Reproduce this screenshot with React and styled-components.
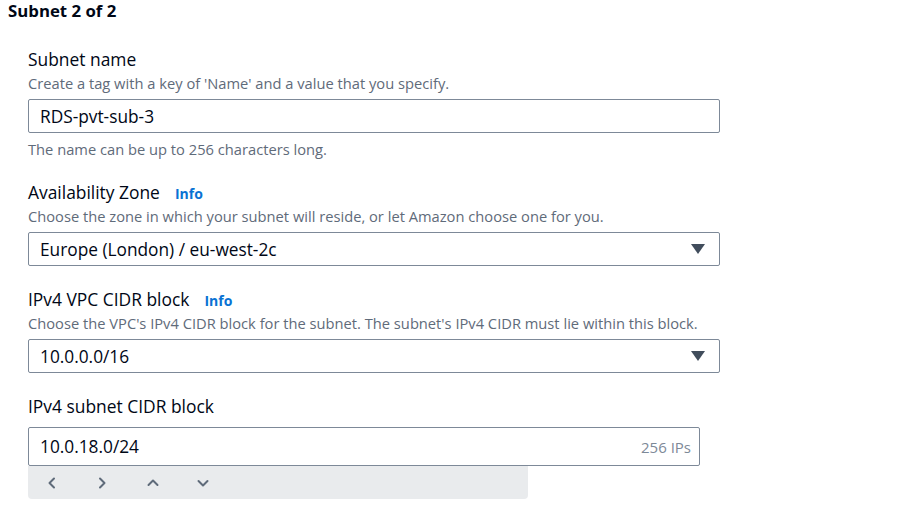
import React from 'react';
import styled, { createGlobalStyle } from 'styled-components';

const GlobalStyle = createGlobalStyle`
  body {
    margin: 0;
    background: #ffffff;
    font-family: 'Open Sans', 'Noto Sans', sans-serif;
    color: #000716;
  }
`;

const Page = styled.div`
  padding: 0 8px;
  width: 907px;
  box-sizing: border-box;
`;

const Title = styled.h2`
  margin: 0;
  font-size: 16.8px;
  line-height: 22px;
  font-weight: 700;
`;

const Form = styled.div`
  padding: 26px 0 0 20px;
  display: flex;
  flex-direction: column;
  gap: 22px;
`;

const Field = styled.div`
  display: flex;
  flex-direction: column;
  width: ${p => p.width || 692}px;
`;

const LabelRow = styled.div`
  display: flex;
  align-items: baseline;
  gap: 15px;
`;

const Label = styled.label`
  font-size: 17.4px;
  line-height: 22px;
`;

const Info = styled.a`
  color: #0972d3;
  font-size: 14px;
  font-weight: 700;
  text-decoration: none;
`;

const Description = styled.div`
  font-size: 14.7px;
  line-height: 20px;
  color: #5f6b7a;
  margin-top: 3px;
  white-space: nowrap;
`;

const Constraint = styled(Description)`
  margin-top: 6px;
`;

const Box = styled.div`
  margin-top: ${p => p.gap ?? 6}px;
  height: ${p => p.height || 34}px;
  box-sizing: border-box;
  border: 1px solid #7d8998;
  border-radius: 2px;
  padding: 0 11px;
  display: flex;
  align-items: center;
  justify-content: space-between;
  font-size: 17.3px;
  background: #fff;
`;

const Suffix = styled.span`
  color: #7d8998;
  font-size: 15px;
  margin-right: -3px;
`;

const Caret = styled.span`
  width: 0;
  height: 0;
  border-left: 7px solid transparent;
  border-right: 7px solid transparent;
  border-top: 10px solid #414d5c;
  margin-right: 3px;
`;

const Toolbar = styled.div`
  width: 500px;
  height: 33px;
  box-sizing: border-box;
  background: #e9ebed;
  border-radius: 0 0 4px 4px;
  display: flex;
  align-items: center;
  padding-left: 17px;
  gap: 36.3px;
`;

const NavButton = styled.span`
  width: 14px;
  height: 14px;
  display: flex;
  align-items: center;
  justify-content: center;
`;

const chevrons = {
  left: '9,2.5 4.5,7 9,11.5',
  right: '5,2.5 9.5,7 5,11.5',
  up: '2.5,9 7,4.5 11.5,9',
  down: '2.5,5 7,9.5 11.5,5',
};

const Chevron = ({ dir }) => (
  <NavButton>
    <svg width="14" height="14" viewBox="0 0 14 14">
      <polyline points={chevrons[dir]} fill="none" stroke="#5f6b7a" strokeWidth="2" strokeLinecap="round" strokeLinejoin="round" />
    </svg>
  </NavButton>
);

export default function App() {
  return (
    <Page>
      <GlobalStyle />
      <Title>Subnet 2 of 2</Title>
      <Form>
        <Field>
          <Label>Subnet name</Label>
          <Description>Create a tag with a key of 'Name' and a value that you specify.</Description>
          <Box>RDS-pvt-sub-3</Box>
          <Constraint>The name can be up to 256 characters long.</Constraint>
        </Field>
        <Field>
          <LabelRow>
            <Label>Availability Zone</Label>
            <Info>Info</Info>
          </LabelRow>
          <Description>Choose the zone in which your subnet will reside, or let Amazon choose one for you.</Description>
          <Box>
            Europe (London) / eu-west-2c
            <Caret />
          </Box>
        </Field>
        <Field>
          <LabelRow>
            <Label>IPv4 VPC CIDR block</Label>
            <Info>Info</Info>
          </LabelRow>
          <Description>Choose the VPC's IPv4 CIDR block for the subnet. The subnet's IPv4 CIDR must lie within this block.</Description>
          <Box>
            10.0.0.0/16
            <Caret />
          </Box>
        </Field>
        <Field width={672}>
          <Label>IPv4 subnet CIDR block</Label>
          <Box gap={10} height={39}>
            10.0.18.0/24
            <Suffix>256 IPs</Suffix>
          </Box>
          <Toolbar>
            <Chevron dir="left" />
            <Chevron dir="right" />
            <Chevron dir="up" />
            <Chevron dir="down" />
          </Toolbar>
        </Field>
      </Form>
    </Page>
  );
}
